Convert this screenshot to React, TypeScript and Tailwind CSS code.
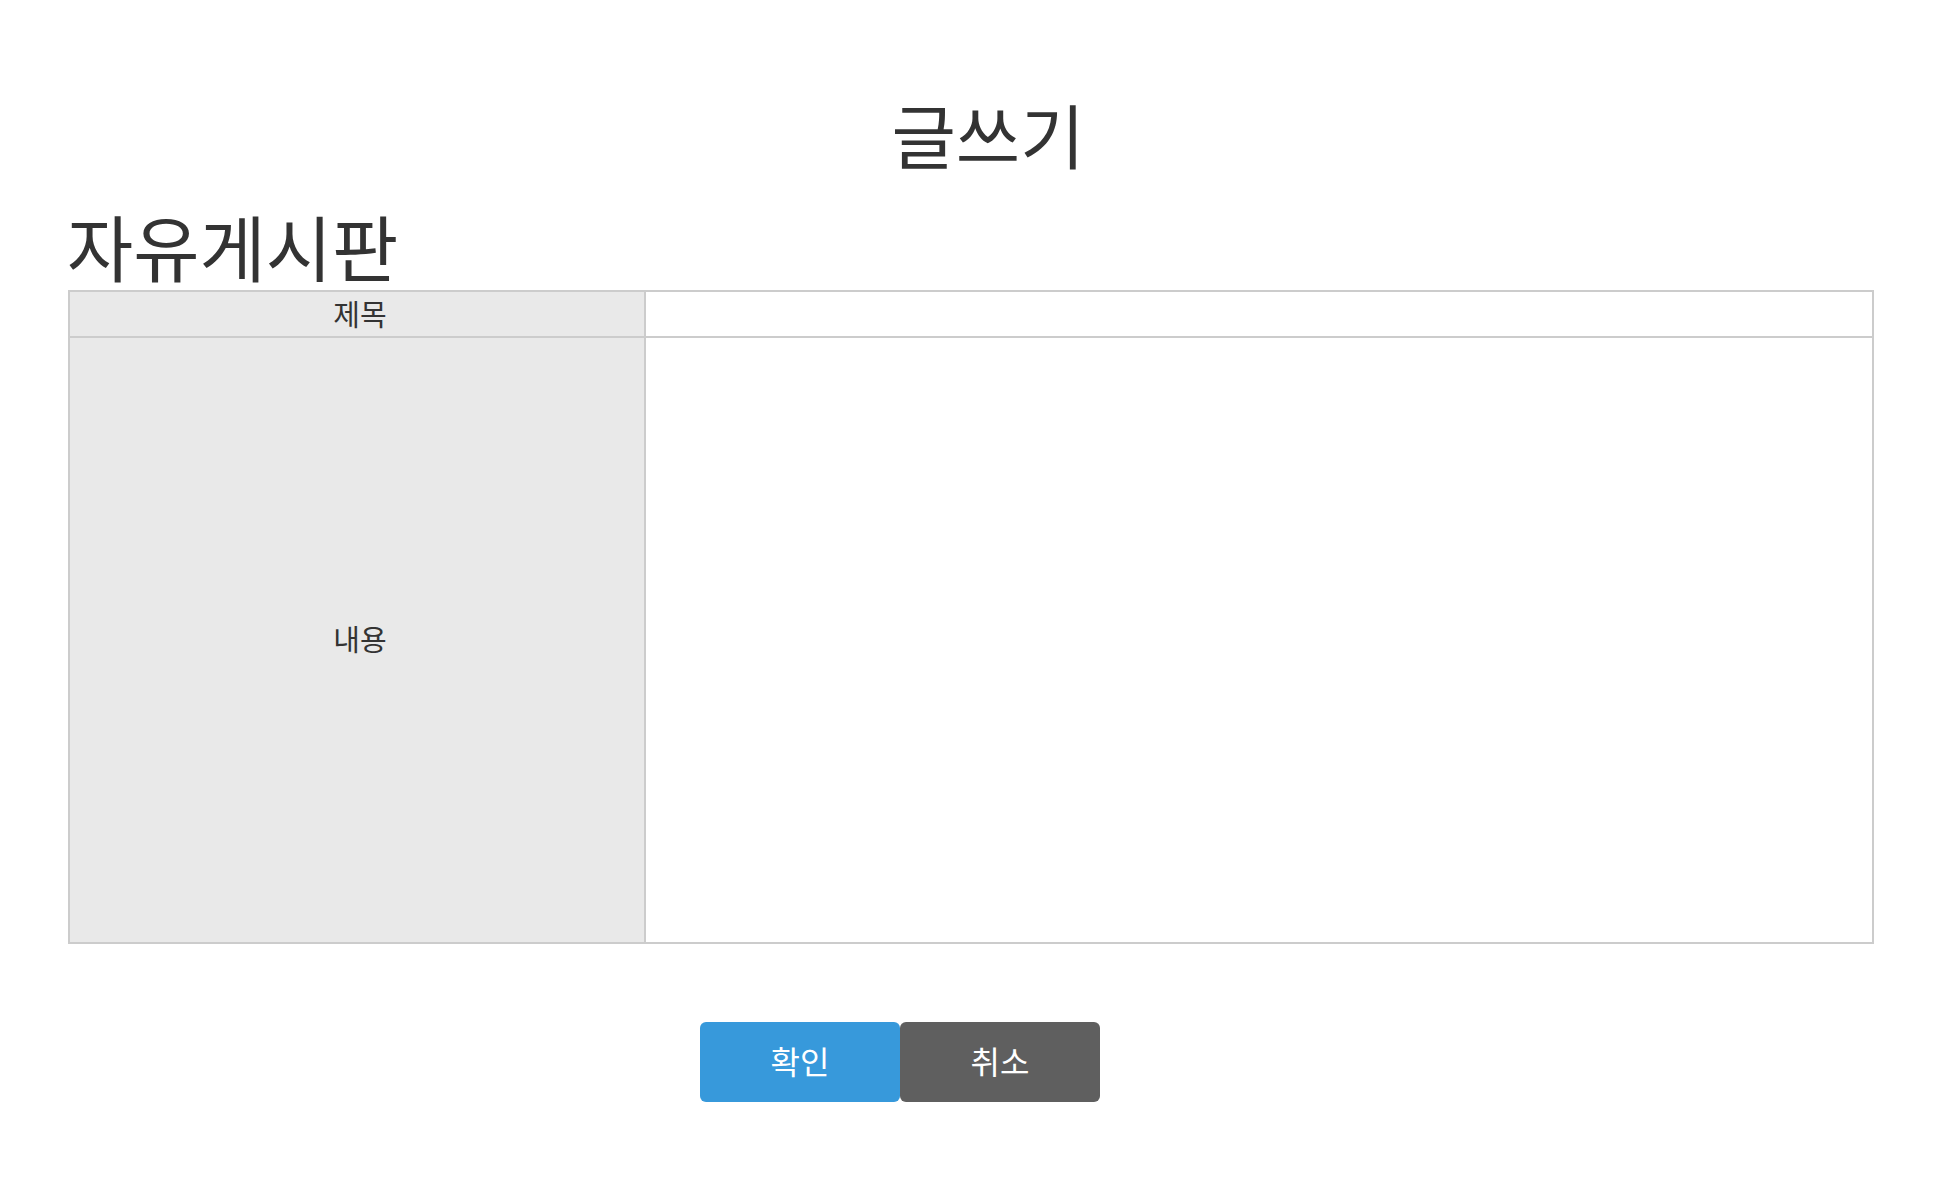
export default function App() {
  const font = { fontFamily: '"Noto Sans CJK KR", "Noto Sans", sans-serif' };
  return (
    <div className="w-[1956px] min-h-[1200px] bg-white text-[#333333]" style={font}>
      <div className="pt-[99px] text-center text-[70px] leading-none pl-[20px]">글쓰기</div>
      <div className="mt-[40px] ml-[67px] text-[72px] leading-none">자유게시판</div>
      <div className="mt-[9px] ml-[68px] w-[1806px] border-2 border-[#cccccc] flex flex-col">
        <div className="flex h-[46px] border-b-2 border-[#cccccc]">
          <div className="w-[576px] shrink-0 bg-[#e9e9e9] border-r-2 border-[#cccccc] flex items-center justify-center text-[29px] leading-none pl-[6px] pb-[2px]">제목</div>
          <div className="flex-1 bg-white"></div>
        </div>
        <div className="flex h-[604px]">
          <div className="w-[576px] shrink-0 bg-[#e9e9e9] border-r-2 border-[#cccccc] flex items-center justify-center text-[29px] leading-none pl-[6px] pb-[4px]">내용</div>
          <div className="flex-1 bg-white"></div>
        </div>
      </div>
      <div className="mt-[78px] ml-[700px] flex">
        <button className="w-[200px] h-[80px] rounded-[6px] bg-[#3799db] text-white text-[32px] leading-none pb-[4px]">확인</button>
        <button className="w-[200px] h-[80px] rounded-[6px] bg-[#5f5f5f] text-white text-[32px] leading-none pb-[4px]">취소</button>
      </div>
    </div>
  );
}
